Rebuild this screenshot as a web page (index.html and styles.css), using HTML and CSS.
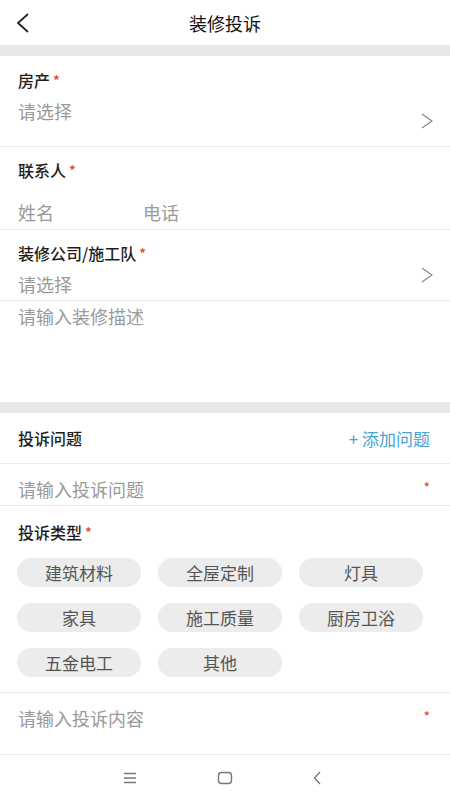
FILE: index.html
```html
<!DOCTYPE html>
<html lang="zh-CN">
<head>
    <meta charset="UTF-8">
    <meta name="viewport" content="width=device-width, initial-scale=1.0">
    <title>装修投诉</title>
    <link rel="stylesheet" href="styles.css">
</head>
<body>
    <div class="header">
        <svg class="back" width="14" height="20" viewBox="0 0 14 20"><path d="M12 1 L2 10 L12 19" fill="none" stroke="#222" stroke-width="1.8"/></svg>
        <div class="title">装修投诉</div>
    </div>
    <div class="band"></div>

    <div class="field field-house">
        <div class="field-main">
            <div class="label">房产<span class="req">*</span></div>
            <div class="placeholder value">请选择</div>
        </div>
        <svg class="arrow arrow-house" width="12" height="16" viewBox="0 0 12 16"><path d="M1 1 L11 8 L1 15" fill="none" stroke="#888" stroke-width="1.3"/></svg>
    </div>

    <div class="field field-contact">
        <div class="field-main">
            <div class="label">联系人<span class="req">*</span></div>
            <div class="contact-inputs">
                <span class="placeholder name">姓名</span>
                <span class="placeholder">电话</span>
            </div>
        </div>
    </div>

    <div class="field field-company">
        <div class="field-main">
            <div class="label">装修公司/施工队<span class="req">*</span></div>
            <div class="placeholder value">请选择</div>
        </div>
        <svg class="arrow arrow-company" width="12" height="16" viewBox="0 0 12 16"><path d="M1 1 L11 8 L1 15" fill="none" stroke="#888" stroke-width="1.3"/></svg>
    </div>

    <div class="desc">
        <div class="placeholder">请输入装修描述</div>
    </div>
    <div class="band"></div>

    <div class="row issue-head">
        <div class="label">投诉问题</div>
        <div class="add">+ 添加问题</div>
    </div>
    <div class="row issue-input">
        <div class="placeholder">请输入投诉问题</div>
        <span class="req">*</span>
    </div>

    <div class="types">
        <div class="label">投诉类型<span class="req">*</span></div>
        <div class="chips">
            <div class="chip">建筑材料</div>
            <div class="chip">全屋定制</div>
            <div class="chip">灯具</div>
            <div class="chip">家具</div>
            <div class="chip">施工质量</div>
            <div class="chip">厨房卫浴</div>
            <div class="chip">五金电工</div>
            <div class="chip">其他</div>
        </div>
    </div>

    <div class="row content-input">
        <div class="placeholder">请输入投诉内容</div>
        <span class="req">*</span>
    </div>

    <div class="navbar">
        <svg width="14" height="12" viewBox="0 0 14 12"><path d="M1 1.5 H13 M1 6 H13 M1 10.5 H13" stroke="#777" stroke-width="1.3"/></svg>
        <svg width="16" height="14" viewBox="0 0 16 14"><rect x="1.5" y="1.5" width="13" height="11" rx="3" fill="none" stroke="#777" stroke-width="1.4"/></svg>
        <svg width="8" height="14" viewBox="0 0 8 14"><path d="M7 1 L1.5 7 L7 13" fill="none" stroke="#777" stroke-width="1.3"/></svg>
    </div>
</body>
</html>
```

FILE: styles.css
```css
body {
    margin: 0;
    width: 450px;
    height: 800px;
    background: #fff;
    font-family: "Noto Sans CJK SC", "Noto Sans", sans-serif;
    color: #222;
    overflow: hidden;
}
.header {
    height: 45px;
    position: relative;
    display: flex;
    align-items: center;
    justify-content: center;
}
.header .back {
    position: absolute;
    left: 16px;
    top: 13px;
}
.title {
    font-size: 18px;
    color: #111;
}
.band {
    height: 11px;
    background: #e8e8eb;
}
.label {
    font-size: 16px;
    line-height: 20px;
    font-weight: 500;
    color: #1e1e1e;
}
.req {
    color: #e0452b;
    font-size: 14px;
    margin-left: 3px;
    vertical-align: top;
}
.placeholder {
    font-size: 18px;
    line-height: 24px;
    color: #9a9a9a;
}
.field {
    display: flex;
    box-sizing: border-box;
    padding: 13px 17px 0 18px;
    border-bottom: 1px solid #ececec;
}
.field-main {
    flex: 1;
}
.field-house {
    height: 91px;
    padding-top: 14px;
}
.field-house .value {
    margin-top: 9px;
}
.arrow-house {
    margin-top: 43px;
}
.field-contact {
    height: 83px;
}
.contact-inputs {
    margin-top: 20px;
    display: flex;
}
.contact-inputs .name {
    width: 125px;
}
.field-company {
    height: 71px;
}
.field-company .value {
    margin-top: 9px;
}
.arrow-company {
    margin-top: 24px;
}
.desc {
    height: 101px;
    box-sizing: border-box;
    padding: 3px 18px 0;
}
.row {
    display: flex;
    align-items: center;
    justify-content: space-between;
    box-sizing: border-box;
    padding: 0 20px 0 18px;
    border-bottom: 1px solid #ececec;
}
.issue-head {
    height: 51px;
}
.add {
    font-size: 17px;
    color: #4aa3d4;
}
.issue-input {
    height: 42px;
    padding-top: 8px;
}
.row .req {
    align-self: center;
    margin-top: -4px;
}
.types {
    box-sizing: border-box;
    height: 187px;
    padding: 16px 18px 0 17px;
    border-bottom: 1px solid #ececec;
}
.types .label {
    padding-left: 1px;
}
.chips {
    margin-top: 16px;
    display: grid;
    grid-template-columns: repeat(3, 124px);
    column-gap: 17px;
    row-gap: 16px;
}
.chip {
    height: 29px;
    border-radius: 15px;
    background: #ececec;
    color: #555;
    font-size: 17px;
    line-height: 29px;
    text-align: center;
}
.content-input {
    height: 62px;
    align-items: flex-start;
    padding-top: 13px;
}
.content-input .req {
    align-self: flex-start;
    margin-top: 0;
}
.navbar {
    height: 46px;
    display: flex;
    align-items: center;
    justify-content: center;
    gap: 80px;
    padding-right: 6px;
}
```
